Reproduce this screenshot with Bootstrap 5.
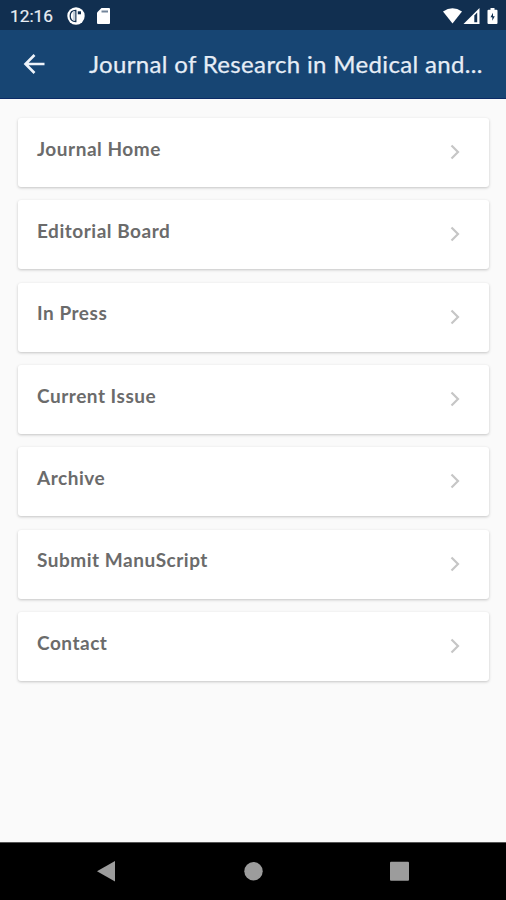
<!DOCTYPE html>
<html lang="en">
<head>
<meta charset="utf-8">
<meta name="viewport" content="width=device-width, initial-scale=1">
<title>Journal of Research in Medical and...</title>
<link href="https://cdn.jsdelivr.net/npm/bootstrap@5.3.0/dist/css/bootstrap.min.css" rel="stylesheet">
<style>
body{background:#fafafa;font-family:Lato,"Liberation Sans",sans-serif;height:900px;overflow:hidden}
svg{display:block;flex:none}
.status{height:30px;background:#112f50;color:#fff;padding:1px 7px 0 10px}
.clock{font:400 17.3px/30px Roboto,sans-serif;width:57px;color:#e9eef5;-webkit-text-stroke:.2px #e9eef5}
.sdcard{margin-left:12px}
.appbar{height:69px;background:#174573;border-bottom:1px solid #0c2b66;padding-left:23px}
.appbar h1{font-size:24px;line-height:30px;letter-spacing:.34px;margin:0 0 0 43px;color:#e6edf6;font-weight:400;-webkit-text-stroke:.25px #e6edf6}
.menu{padding:19px 17px 0 18px;gap:13.33px}
.entry{height:69px;background:#fff;border-radius:3px;box-shadow:0 1px 3px rgba(0,0,0,.22);padding:0 28px 0 19px;color:#6b6b6b;text-decoration:none}
.entry span{font-size:19px;font-weight:700;line-height:24px;margin-top:-7.500px;letter-spacing:.52px}
.entry svg{margin-top:-1px}
.sysnav{height:58px;background:#000;border-top:1px solid #555}
</style>
<script src="https://cdn.jsdelivr.net/npm/bootstrap@5.3.0/dist/js/bootstrap.bundle.min.js"></script>
</head>
<body class="d-flex flex-column">
<svg class="d-none"><symbol id="chevron" viewBox="0 0 12 16"><path d="M2.500 1.500L9 8l-6.500 6.500" fill="none" stroke="#c6c6c6" stroke-width="2.200"/></symbol></svg>
<div class="status d-flex align-items-center">
  <span class="clock">12:16</span>
  <svg width="18" height="18" viewBox="0 0 18 18"><circle cx="9" cy="9" r="8.700" fill="#fff"/><path d="M8.800 3.300v11.200C5.200 14.500 3.200 12.300 3.200 9s2-5.700 5.600-5.700z" fill="#fff" stroke="#112f50" stroke-width="1.300"/><path d="M5.800 4.500h2.400v9H5.800z" fill="#c5ced8"/><path d="M10.800 4.300h3.200v3h-3.200z" fill="#112f50"/></svg>
  <svg class="sdcard" width="13" height="16" viewBox="0 0 13 16"><path d="M4.500 0H12q1 0 1 1v14q0 1-1 1H1q-1 0-1-1V4.500z" fill="#fff"/><path d="M4.500 3.500H11" stroke="#73859a" stroke-width="2"/></svg>
  <svg class="ms-auto" width="56" height="18" viewBox="0 0 56 18"><path d="M0 4.500Q9.500-2 19 4.500L9.500 16.500z" fill="#fff"/><path d="M20.500 17L36.500 1v16z" fill="#fff"/><path d="M31.300 8.500V15.300h2.900V5.600z" fill="#112f50"/><path d="M47.500 1h4v1.700h2q1 0 1 1V16q0 1-1 1h-8q-1 0-1-1V3.700q0-1 1-1h2z" fill="#fff"/><path d="M50 5.800L47.500 10.200h1.800v3.500l2.500-4.400H50z" fill="#112f50"/></svg>
</div>
<header class="appbar d-flex align-items-center">
  <svg width="23" height="20" viewBox="0 0 23 20"><path d="M11.500 1L2.500 10l9 9M2.500 10H21.500" fill="none" stroke="#eef3fa" stroke-width="2.600"/></svg>
  <h1 class="text-nowrap">Journal of Research in Medical and...</h1>
</header>
<nav class="menu d-flex flex-column flex-grow-1">
  <a class="entry d-flex align-items-center justify-content-between" href="#"><span>Journal Home</span><svg width="12" height="16"><use href="#chevron"/></svg></a>
  <a class="entry d-flex align-items-center justify-content-between" href="#"><span>Editorial Board</span><svg width="12" height="16"><use href="#chevron"/></svg></a>
  <a class="entry d-flex align-items-center justify-content-between" href="#"><span>In Press</span><svg width="12" height="16"><use href="#chevron"/></svg></a>
  <a class="entry d-flex align-items-center justify-content-between" href="#"><span>Current Issue</span><svg width="12" height="16"><use href="#chevron"/></svg></a>
  <a class="entry d-flex align-items-center justify-content-between" href="#"><span>Archive</span><svg width="12" height="16"><use href="#chevron"/></svg></a>
  <a class="entry d-flex align-items-center justify-content-between" href="#"><span>Submit ManuScript</span><svg width="12" height="16"><use href="#chevron"/></svg></a>
  <a class="entry d-flex align-items-center justify-content-between" href="#"><span>Contact</span><svg width="12" height="16"><use href="#chevron"/></svg></a>
</nav>
<footer class="sysnav">
  <svg width="506" height="57" viewBox="0 0 506 57" fill="#9c9c9c"><path d="M97 28.200L115 18v20.500z"/><circle cx="253.500" cy="28.200" r="9.200"/><rect x="390" y="18.800" width="19" height="19" rx="1"/></svg>
</footer>
</body>
</html>
